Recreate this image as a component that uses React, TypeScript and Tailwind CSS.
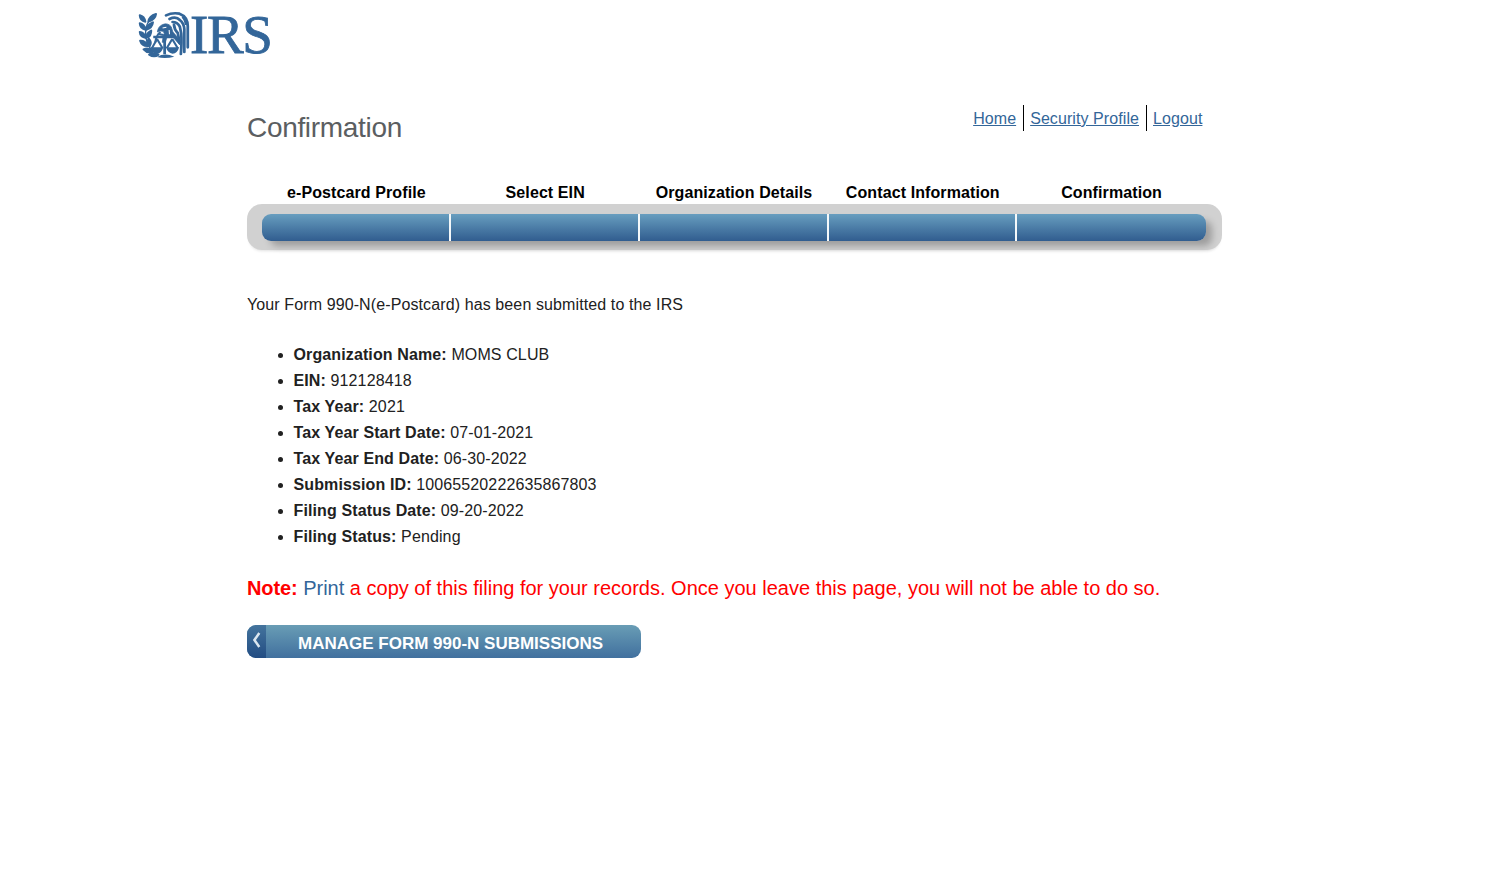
const steps = ["e-Postcard Profile", "Select EIN", "Organization Details", "Contact Information", "Confirmation"];

const details = [
  ["Organization Name:", "MOMS CLUB"],
  ["EIN:", "912128418"],
  ["Tax Year:", "2021"],
  ["Tax Year Start Date:", "07-01-2021"],
  ["Tax Year End Date:", "06-30-2022"],
  ["Submission ID:", "10065520222635867803"],
  ["Filing Status Date:", "09-20-2022"],
  ["Filing Status:", "Pending"],
];

function Logo() {
  return (
    <div className="flex h-[54px] items-start text-[#336699]">
      <svg viewBox="0 0 162 162" className="h-[54px] w-[54px] shrink-0" fill="currentColor" aria-hidden="true">
        <g transform="translate(-1 0) scale(1.035 1)">
          {/* laurel branch */}
          <g stroke="currentColor" strokeWidth="6" strokeLinejoin="round">
            <path d="M12 22Q25 25 28 41Q13 38 12 22ZM59 18Q57 35 37 41Q39 24 59 18Z" />
            <path d="M12 46Q25 48 29 65Q13 62 12 46ZM50 43Q48 59 32 65Q32 50 50 43Z" />
            <path d="M12 72Q24 73 30 90Q13 87 12 72ZM45 68Q45 84 33 89Q29 76 45 68Z" />
            <path d="M13 98Q28 97 36 114Q18 115 13 98ZM38 92Q48 103 41 114Q30 103 38 92Z" />
            <path d="M23 124Q38 117 50 130Q35 138 23 124ZM39 140Q51 130 66 140Q54 150 39 140Z" />
          </g>
          <path d="M39 38Q25 60 30 90Q34 119 56 134" fill="none" stroke="currentColor" strokeWidth="4" />
          {/* wing feathers */}
          <g fill="none" stroke="currentColor" strokeWidth="8" strokeLinecap="round">
            <path d="M88 22Q106 13 127 17Q151 26 151 55L151 118" />
            <path d="M98 33Q117 24 128 36Q140 46 141 63L141 132" />
            <path d="M107 42Q121 42 128 56L132 76Q134 102 131 138" />
            <path d="M111 50Q112 65 122 75Q125 88 127 104" />
          </g>
          <path d="M135 27Q144 35 145 51" fill="none" stroke="currentColor" strokeWidth="6" />
          {/* eagle */}
          <path d="M63 72Q64 57 77 50Q93 43 103 56L108 72L124 91L128 111L107 86L92 84L86 103L77 103L80 83Q86 75 79 70Q71 67 63 72Z" stroke="currentColor" strokeWidth="2" />
          <path d="M78 60L89 58M97 66L98 79" fill="none" stroke="white" strokeWidth="3" />
          <path d="M72 72Q60 80 57 103M65 78L81 81" fill="none" stroke="currentColor" strokeWidth="6" />
          {/* scales */}
          <path d="M51 87H111M84 82V139" fill="none" stroke="currentColor" strokeWidth="8" />
          <path d="M62 93L47 121M62 93L78 121M106 93L90 121M106 93L122 121" fill="none" stroke="currentColor" strokeWidth="6" />
          <path d="M43 118H80Q75 137 62 137Q48 136 43 118ZM88 118H126Q121 137 107 137Q93 136 88 118Z" />
          <path d="M62 147Q84 133 112 146Q85 154 62 147Z" />
        </g>
      </svg>
      <span className="pt-px font-['Liberation_Serif',serif] text-[55px] leading-[52px] tracking-[-1.4px] [-webkit-text-stroke:0.8px_#336699]">IRS</span>
    </div>
  );
}

export default function App() {
  return (
    <div className="h-[875px] overflow-hidden bg-white pt-2 font-['Liberation_Sans',Arial,sans-serif] text-base text-[#212121]">
      <header className="h-[97px] pl-[136px]">
        <Logo />
      </header>
      <main className="ml-[247px] w-[975px]">
        <div className="flex h-[79px] items-start justify-between">
          <h1 className="mt-[5px] text-[28px] leading-9 tracking-[-0.32px] text-[#5b5e61]">Confirmation</h1>
          <nav className="mr-[19px] flex leading-[26px] tracking-[0.08px] text-[#336699]">
            <a href="#" className="border-r border-black pr-[7px] pt-px leading-[25px] underline">Home</a>
            <a href="#" className="border-r border-black pl-[6px] pr-[7px] pt-px leading-[25px] underline">Security Profile</a>
            <a href="#" className="w-[56px] pl-[6px] pt-px leading-[25px] underline">Logout</a>
          </nav>
        </div>
        <div className="ml-[15px] grid h-5 w-[944px] grid-cols-5 text-center font-bold leading-[18px] tracking-[0.1px] text-black">
          {steps.map((step) => (
            <span key={step} className="whitespace-nowrap">{step}</span>
          ))}
        </div>
        <div className="h-[46px] rounded-[15px] bg-[#d1d1d1] pl-[15px] pr-4 pt-[10px] shadow-[0_3px_3px_-2px_rgba(0,0,0,0.12)]">
          <div className="grid h-[27px] grid-cols-[188.5px_189px_189px_188.5px_1fr] rounded-[9px] bg-linear-to-b from-[#689ebf] to-[#315d8f] shadow-[7px_6px_7px_-1px_rgba(0,0,0,0.25)]">
            {steps.map((step) => (
              <span key={step} className="border-r-2 border-[#f4f8fa] last:border-r-0" />
            ))}
          </div>
        </div>
        <p className="mt-[42px] leading-[26px] tracking-[0.11px]">Your Form 990-N(e-Postcard) has been submitted to the IRS</p>
        <ul className="mt-6 list-disc pl-[46.5px] leading-[26px] tracking-[0.12px]">
          {details.map(([label, value]) => (
            <li key={label}><strong>{label}</strong> {value}</li>
          ))}
        </ul>
        <p className="mt-[23px] whitespace-nowrap text-xl leading-[30px] text-[#ff0000]">
          <strong className="tracking-[-0.1px]">Note:</strong> <a href="#" className="text-[#336699]">Print</a> a copy of this filing for your records. Once you leave this page, you will not be able to do so.
        </p>
        <button className="mt-[22px] flex h-[33px] w-[394px] overflow-hidden rounded-[9px] bg-linear-to-b from-[#699db5] to-[#41709e] font-bold text-white">
          <span className="flex h-full w-[19px] items-start bg-linear-to-b from-[#44749d] to-[#234d83] pl-[5px] pt-[7px]">
            <svg viewBox="0 0 10 16" className="h-4 w-[10px]" fill="none" stroke="#dce7f0" strokeWidth="2.5">
              <path d="M7.3 1L2.4 8L7.3 15" />
            </svg>
          </span>
          <span className="whitespace-nowrap pl-8 pt-px text-[17px] leading-9">MANAGE FORM 990-N SUBMISSIONS</span>
        </button>
      </main>
    </div>
  );
}
